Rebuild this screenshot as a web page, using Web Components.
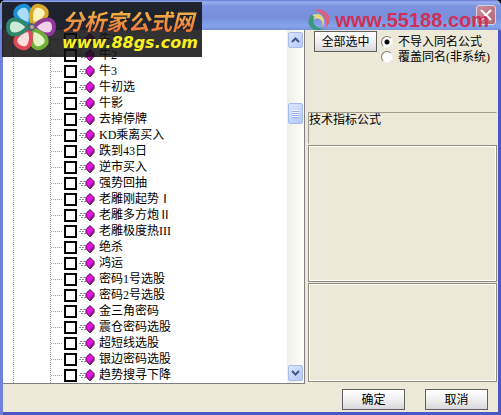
<!DOCTYPE html>
<html lang="zh-CN">
<head>
<meta charset="utf-8">
<title>导入公式</title>
<style>
html, body {
   margin: 0;
   height: 100%;
}

body {
   background: #000;
   color: #000;
   font: 12px/16px "Liberation Serif", "Noto Sans CJK SC", sans-serif;
   overflow: hidden;
}
</style>
</head>
<body>

<xp-dialog>
   <site-banner slot="overlay"></site-banner>
   <site-mark slot="overlay"></site-mark>

   <formula-list></formula-list>
   <import-panel></import-panel>

   <xp-button slot="footer">确定</xp-button>
   <xp-button slot="footer">取消</xp-button>
</xp-dialog>

<script>
const attach = (el, html) => {
   el.attachShadow({ mode: 'open' }).innerHTML = html
}

// Window frame, with its title bar, body and footer
class XpDialog extends HTMLElement {
   constructor() {
      super()
      attach(this, `
<style>
:host {
   display: grid;
   grid-template-rows: 30px 1fr 28px;
   box-sizing: border-box;
   min-height: 100vh;
   position: relative;
   border-radius: 6px 6px 0 0;
   overflow: hidden;
   background: #ece9d8;
   box-shadow: inset 3px 0 #7080dc, inset -3px -3px #4c56c4;
   padding-bottom: 3px;
}

header {
   display: flex;
   justify-content: flex-end;
   align-items: center;
   padding: 0 5px;
   background: linear-gradient(#6478d0 0, #98b0f0 2px, #7c94e0 6px, #7890dc 18px, #84a4ec 26px, #7890d8 30px);
}

header button {
   width: 20px;
   height: 20px;
   padding: 0;
   border: 1px solid #d8d4ec;
   border-radius: 3px;
   background: linear-gradient(135deg, #cc9098, #b46474);
}

header svg {
   display: block;
   margin: auto;
}

main {
   display: grid;
   grid-template-columns: minmax(0, 302fr) minmax(0, 192fr);
   margin: 0 4px 0 3px;
}

footer {
   display: flex;
   justify-content: flex-end;
   align-items: flex-end;
   gap: 20px;
   padding: 0 13px 2px;
}
</style>
<header>
   <button aria-label="关闭">
      <svg width="12" height="12" viewBox="0 0 12 12"><path d="M1 1 11 11M11 1 1 11" stroke="#fff" stroke-width="2"/></svg>
   </button>
</header>
<main><slot></slot></main>
<footer><slot name="footer"></slot></footer>
<slot name="overlay"></slot>`)
   }
}

class XpButton extends HTMLElement {
   constructor() {
      super()
      attach(this, `
<style>
:host {
   display: block;
   width: 63px;
}

button {
   display: block;
   width: 100%;
   height: 21px;
   padding: 0;
   border: 1px solid #606060;
   background: linear-gradient(#fff, #f0f0f0 50%, #d8d8dc);
   color: inherit;
   font: inherit;
   white-space: nowrap;
}
</style>
<button><slot></slot></button>`)
   }
}

// One formula of the tree, with its tick box
class FormulaRow extends HTMLElement {
   constructor() {
      super()
      attach(this, `
<style>
:host {
   display: block;
   height: 16px;
}

label {
   display: flex;
   align-items: center;
   height: 16px;
   white-space: nowrap;
}

label::before {
   content: "";
   width: 11px;
   margin-right: 2px;
   border-top: 1px dotted #a0a0a0;
}

input {
   appearance: none;
   width: 13px;
   height: 13px;
   margin: 0 2px 0 0;
   border: 2px solid #000;
   background: #fff;
}

svg {
   margin-right: 3px;
}
</style>
<label>
   <input type="checkbox">
   <svg width="17" height="14" viewBox="0 0 17 14">
      <path d="M1 5.500h5M0 7.500h6M2 9.500h5" stroke="#8890a0" stroke-dasharray="2 1"/>
      <path d="M11 1.500 15 5.500V8.500L11.500 12.500H10.500L7 8.500V5.500Z" fill="#e414e0" stroke="#400840"/>
      <path d="M11 12 15 8.500V6L11 9.500Z" fill="#98088c"/>
   </svg>
   <slot></slot>
</label>`)
   }
}

class XpScrollbar extends HTMLElement {
   constructor() {
      super()
      attach(this, `
<style>
:host {
   display: flex;
   flex-direction: column;
   align-items: center;
   width: 17px;
   padding: 2px 0;
   box-sizing: border-box;
   background: linear-gradient(90deg, #f0f0e8, #fefefb);
}

button, .thumb {
   display: grid;
   place-content: center;
   box-sizing: border-box;
   width: 15px;
   height: 16px;
   padding: 0;
   border: 1px solid #a8bcec;
   border-radius: 2px;
   background: linear-gradient(135deg, #dce6ff, #b4c8f8);
}

.thumb {
   height: 21px;
   margin: 55px 0 auto;
}

svg {
   display: block;
}
</style>
<button aria-label="向上"><svg width="9" height="6" viewBox="0 0 9 6"><path d="M1 5 4.500 1.500 8 5" fill="none" stroke="#405888" stroke-width="2"/></svg></button>
<div class="thumb"><svg width="7" height="8" viewBox="0 0 7 8"><path d="M0 .5h7M0 2.500h7M0 4.500h7M0 6.500h7" stroke="#f4f8ff"/><path d="M0 1.500h7M0 3.500h7M0 5.500h7M0 7.500h7" stroke="#98b0e8"/></svg></div>
<button aria-label="向下"><svg width="9" height="6" viewBox="0 0 9 6"><path d="M1 1 4.500 4.500 8 1" fill="none" stroke="#405888" stroke-width="2"/></svg></button>`)
   }
}

const formulas = [
   '牛1', '牛2', '牛3', '牛初选', '牛影', '去掉停牌', 'KD乘离买入', '跌到43日',
   '逆市买入', '强势回抽', '老雕刚起势Ⅰ', '老雕多方炮Ⅱ', '老雕极度热III', '绝杀',
   '鸿运', '密码1号选股', '密码2号选股', '金三角密码', '震仓密码选股', '超短线选股',
   '银边密码选股', '趋势搜寻下降'
]

class FormulaList extends HTMLElement {
   constructor() {
      super()
      attach(this, `
<style>
:host {
   display: grid;
   grid-template-columns: 1fr 17px;
   border: solid #808080;
   border-width: 0 1px 1px 0;
   background: #fff;
}

.tree {
   margin-left: 10px;
   padding: 1px 0 0 36px;
   border-left: 1px dotted #a0a0a0;
}

.branch {
   border-left: 1px dotted #a0a0a0;
}
</style>
<div class="tree">
   <div class="branch">${formulas.map(name => `<formula-row>${name}</formula-row>`).join('')}</div>
</div>
<xp-scrollbar></xp-scrollbar>`)
   }
}

// Options on the right, with the empty detail boxes under them
class ImportPanel extends HTMLElement {
   constructor() {
      super()
      attach(this, `
<style>
:host {
   display: grid;
   grid-template-rows: 81px 32px 1fr 99px;
   gap: 1px;
   padding: 0 0 2px 3px;
}

.options {
   display: flex;
   align-items: flex-start;
   gap: 4px;
   padding: 1px 0 0 6px;
}

fieldset {
   margin: 0;
   padding: 3px 0 0;
   border: 0;
   min-width: 0;
}

label {
   display: flex;
   align-items: center;
   height: 15px;
   white-space: nowrap;
}

input {
   appearance: none;
   flex: none;
   width: 12px;
   height: 12px;
   margin: 0 5px 0 0;
   border: 1px solid;
   border-color: #807c70 #f4f2e8 #f4f2e8 #807c70;
   border-radius: 50%;
   background: #fff;
}

input:checked {
   background: radial-gradient(circle, #000 2px, #fff 3px);
}

.kind {
   border: 1px solid;
   border-color: #a09c90 #ece9d8 #ece9d8 #a09c90;
   line-height: 14px;
}

.box {
   border: 1px solid #908c80;
   box-shadow: inset 0 0 0 1px #fff;
}
</style>
<div class="options">
   <xp-button>全部选中</xp-button>
   <fieldset>
      <label><input type="radio" name="same" checked>不导入同名公式</label>
      <label><input type="radio" name="same">覆盖同名(非系统)</label>
   </fieldset>
</div>
<div class="kind">技术指标公式</div>
<div class="box"></div>
<div class="box"></div>`)
   }
}

// Dark site badge laid over the top left corner
class SiteBanner extends HTMLElement {
   constructor() {
      super()
      const petals = [
         ['#1890d8', '#a8dcf8'], ['#d8a828', '#fcf4c0'], ['#903898', '#f0d0ec'],
         ['#70b038', '#e4f4c8'], ['#e04858', '#fce0e0'], ['#30886c', '#d0ecd8']
      ]
      attach(this, `
<style>
:host {
   position: absolute;
   left: 2px;
   top: 2px;
   display: flex;
   gap: 6px;
   width: 200px;
   height: 55px;
   background: rgb(16 16 16 / 0.86);
}

div {
   display: grid;
   align-content: center;
   white-space: nowrap;
}

strong {
   font: italic 700 22px/26px "Noto Sans CJK SC", sans-serif;
   color: transparent;
   background: linear-gradient(#f0c048, #f07038);
   background-clip: text;
}

a {
   font: italic 700 16px/20px "DejaVu Sans", sans-serif;
   color: #f8f020;
   text-decoration: none;
}
</style>
<svg width="54" height="55" viewBox="-29 -25 54 55">
   ${petals.map(([edge, fill], i) => `<path transform="rotate(${i * 60 - 30})" d="M0-3C-9-11-11-23 0-23S9-11 0-3Z" fill="${fill}" stroke="${edge}" stroke-width="4"/>`).join('')}
   <circle r="4" fill="#406878"/>
   <circle cx="1" r="2" fill="#d0a080"/>
</svg>
<div>
   <strong>分析家公式网</strong>
   <a href="#">www.88gs.com</a>
</div>`)
   }
}

// Red site mark laid over the title bar
class SiteMark extends HTMLElement {
   constructor() {
      super()
      attach(this, `
<style>
:host {
   position: absolute;
   right: 12px;
   top: 6px;
   display: flex;
   align-items: center;
   gap: 3px;
   pointer-events: none;
}

a {
   font: 700 20px/28px "Liberation Sans", sans-serif;
   color: #d03058;
   text-decoration: none;
}
</style>
<svg width="26" height="26" viewBox="0 0 26 26">
   <path d="M8 3C18-1 28 10 22 18L19 23C22 14 18 6 8 3Z" fill="#d86080"/>
   <path d="M7 8C14 4 22 12 16 20C18 13 13 9 6 13Z" fill="#e8d878"/>
   <path d="M6 7C-2 15 4 27 19 22C11 22 4 17 9 9C7 10 6 9 6 7Z" fill="#389880"/>
</svg>
<a href="#">www.55188.com</a>`)
   }
}

customElements.define('xp-button', XpButton)
customElements.define('xp-scrollbar', XpScrollbar)
customElements.define('formula-row', FormulaRow)
customElements.define('formula-list', FormulaList)
customElements.define('import-panel', ImportPanel)
customElements.define('site-banner', SiteBanner)
customElements.define('site-mark', SiteMark)
customElements.define('xp-dialog', XpDialog)
</script>
</body>
</html>
